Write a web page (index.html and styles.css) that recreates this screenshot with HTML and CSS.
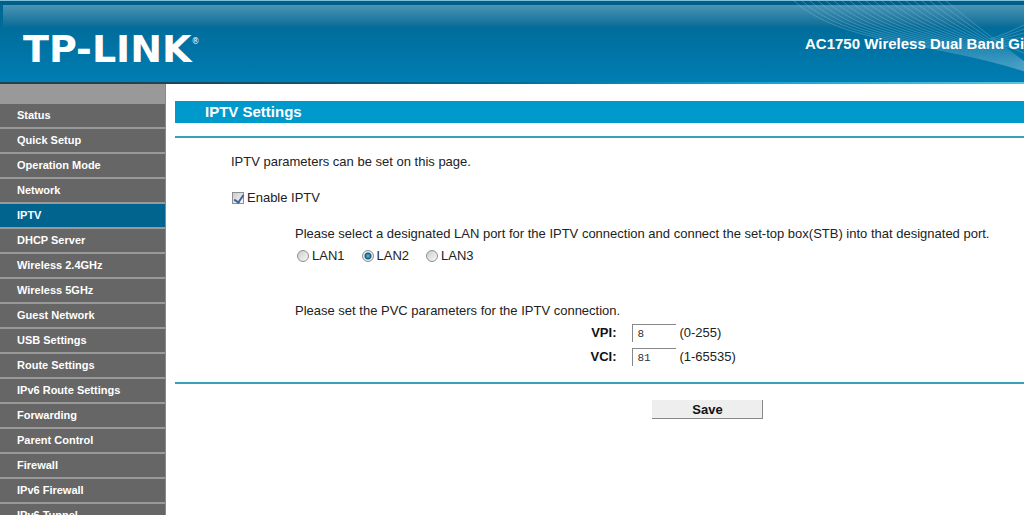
FILE: index.html
```html
<!DOCTYPE html>
<html lang="en">
<head>
	<title>IPTV Settings</title>
	<meta charset="utf-8">
	<meta name="viewport" content="width=device-width, initial-scale=1">
	<link rel="stylesheet" href="styles.css">
</head>
<body>
<header class="header">
	<svg class="waves" viewBox="0 0 230 80" aria-hidden="true">
		<g id="waves"></g>
	</svg>
	<div class="logo">TP-LINK<sup>®</sup></div>
	<div class="model">AC1750 Wireless Dual Band Gigabit</div>
</header>
<div class="page">
	<nav class="menu">
		<a href="#">Status</a>
		<a href="#">Quick Setup</a>
		<a href="#">Operation Mode</a>
		<a href="#">Network</a>
		<a href="#" class="active">IPTV</a>
		<a href="#">DHCP Server</a>
		<a href="#">Wireless 2.4GHz</a>
		<a href="#">Wireless 5GHz</a>
		<a href="#">Guest Network</a>
		<a href="#">USB Settings</a>
		<a href="#">Route Settings</a>
		<a href="#">IPv6 Route Settings</a>
		<a href="#">Forwarding</a>
		<a href="#">Parent Control</a>
		<a href="#">Firewall</a>
		<a href="#">IPv6 Firewall</a>
		<a href="#">IPv6 Tunnel</a>
	</nav>
	<main class="main">
		<h1>IPTV Settings</h1>
		<form class="settings">
			<p>IPTV parameters can be set on this page.</p>
			<div class="enable">
				<input type="checkbox" id="enable" checked>
				<label for="enable">Enable IPTV</label>
			</div>
			<div class="ports">
				<p>Please select a designated LAN port for the IPTV connection and connect the set-top box(STB) into that designated port.</p>
				<div class="radios">
					<label><input type="radio" name="port">LAN1</label>
					<label><input type="radio" name="port" checked>LAN2</label>
					<label><input type="radio" name="port">LAN3</label>
				</div>
				<p>Please set the PVC parameters for the IPTV connection.</p>
			</div>
			<div class="field">
				<label for="vpi">VPI:</label>
				<input type="text" id="vpi" value="8">
				<span>(0-255)</span>
			</div>
			<div class="field">
				<label for="vci">VCI:</label>
				<input type="text" id="vci" value="81">
				<span>(1-65535)</span>
			</div>
			<div class="buttons">
				<button type="button">Save</button>
			</div>
		</form>
	</main>
</div>
<script src="waves.js"></script>
</body>
</html>
```

FILE: styles.css
```css
* {
	box-sizing: border-box;
	margin: 0;
	padding: 0;
}

body {
	height: 100vh;
	overflow: hidden;
	background: #fff;
	color: #222;
	font-family: "Liberation Sans", Arial, sans-serif;
	font-size: 13px;
	line-height: 16px;
}

/* header */
.header {
	position: relative;
	display: flex;
	height: 84px;
	padding-left: 23px;
	overflow: hidden;
	border-top: 1px solid #7fbfdc;
	background:
		linear-gradient(90deg, #243f4d 12%, #006c98 50%, #18a5cf 75%, #5cc3e0) 0 100% / 100% 2px no-repeat,
		linear-gradient(#005f88, #005f88) 0 0 / 100% 4px no-repeat,
		linear-gradient(#4c94b5, #0a6c97) 3px 4px / 100% 22px no-repeat,
		linear-gradient(#006590, #007eb3);
	color: #fff;
}

.waves {
	position: absolute;
	right: 0;
	top: 0;
	width: 230px;
	height: 80px;
	fill: none;
	stroke: #8fc7e0;
	stroke-opacity: .35;
}

.logo {
	padding-top: 28px;
	font-family: "DejaVu Sans", Verdana, sans-serif;
	font-size: 38px;
	font-weight: bold;
	line-height: 40px;
}

.logo sup {
	font-size: 8px;
	font-weight: normal;
	line-height: 8px;
	vertical-align: 18px;
}

.model {
	position: relative;
	flex: 0 0 219px;
	min-width: 0;
	margin-left: auto;
	padding-top: 35px;
	overflow: hidden;
	font-size: 15px;
	font-weight: bold;
	white-space: nowrap;
}

/* menu */
.page {
	display: flex;
}

.menu {
	flex: 0 0 166px;
	padding-top: 20px;
	border-right: 1px solid #8a8a8a;
	background: #999;
}

.menu a {
	display: block;
	height: 25px;
	padding-left: 17px;
	border-bottom: 2px solid #999;
	background: #666;
	color: #fff;
	font-size: 11px;
	font-weight: bold;
	line-height: 23px;
	text-decoration: none;
}

.menu a.active {
	background: #00648f;
}

/* content */
.main {
	flex: 1;
	min-width: 0;
	padding: 17px 0 0 9px;
}

.main h1 {
	height: 22px;
	padding-left: 30px;
	background: #09c;
	color: #fff;
	font-size: 15px;
	line-height: 22px;
}

.settings {
	margin-top: 13px;
	padding-top: 16px;
	border-top: 2px solid #3a9fb8;
}

.settings p {
	white-space: nowrap;
}

.settings > p,
.enable {
	padding-left: 56px;
}

.enable {
	display: flex;
	align-items: center;
	gap: 3px;
	margin-top: 20px;
}

.ports {
	padding: 20px 0 2px 120px;
}

.radios {
	display: flex;
	gap: 15px;
	margin: 6px 0 39px;
}

.radios label {
	display: flex;
	align-items: center;
	gap: 3px;
}

input[type="checkbox"],
input[type="radio"] {
	appearance: none;
	width: 12px;
	height: 12px;
	border: 1px solid #8e8f8f;
	background: linear-gradient(135deg, #ccc, #f8f8f8);
}

input[type="checkbox"] {
	margin-left: 1px;
}

input[type="checkbox"]:checked::before {
	content: "";
	display: block;
	width: 4px;
	height: 8px;
	margin-left: 3px;
	border: solid #3f5fa5;
	border-width: 0 2px 2px 0;
	transform: rotate(35deg);
}

input[type="radio"] {
	margin-left: 2px;
	border-radius: 50%;
}

input[type="radio"]:checked {
	background: radial-gradient(circle at 50% 50%, #6fc3e6 0, #14567d 3px, #e4eef3 4px);
}

.field {
	display: grid;
	grid-template-columns: 52% 44px 1fr;
	align-items: center;
	height: 24px;
}

.field label {
	color: #111;
	font-weight: bold;
	text-align: right;
}

.field input {
	width: 44px;
	height: 18px;
	margin-left: 16px;
	padding-left: 4px;
	border: solid #888;
	border-width: 1px 0 0 1px;
	background: #fff;
	color: #333;
	font-family: "Liberation Mono", "Courier New", monospace;
	font-size: 11px;
}

.field span {
	padding-left: 19px;
}

.buttons {
	display: flex;
	margin-top: 13px;
	padding: 16px 0 0 56%;
	border-top: 2px solid #3a9fb8;
}

.buttons button {
	width: 111px;
	height: 19px;
	margin-left: 2px;
	border: solid #888;
	border-width: 0 1px 1px 0;
	background: #eee;
	color: #111;
	font-family: inherit;
	font-size: 13px;
	font-weight: bold;
}
```

FILE: waves.js
```js
// two fans of thin lines behind the model name
var g = document.getElementById('waves');

function addPath(d) {
	var path = document.createElementNS('http://www.w3.org/2000/svg', 'path');
	path.setAttribute('d', d);
	g.appendChild(path);
}

for (var i = 0; i < 20; i++) {
	var x = i * 8;
	addPath('M' + x + ' 0 C' + (x + 50 - i) + ' ' + (44 - i) + ' ' + (130 + i * 3) + ' ' + (38 - i / 2) + ' 230 ' + (70 - i / 2));
}
for (var j = 0; j < 8; j++) {
	addPath('M' + (196 + j * 2) + ' ' + (38 + j) + ' Q215 ' + (32 + j * 2) + ' 230 ' + (24 + j * 4));
}
```
